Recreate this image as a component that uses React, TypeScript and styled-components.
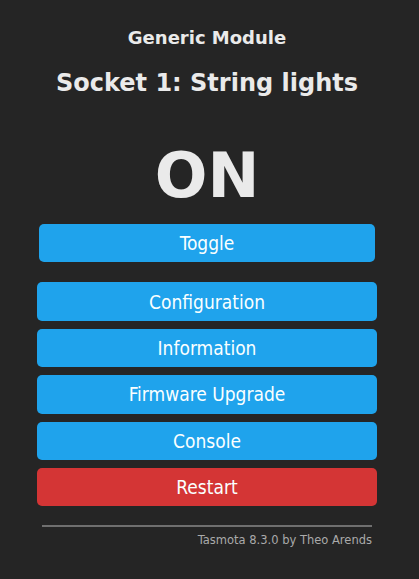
import { createGlobalStyle } from "styled-components";
import styled from "styled-components";

const GlobalStyle = createGlobalStyle`
  html, body {
    margin: 0;
    padding: 0;
    background-color: #252525;
  }
  body {
    font-family: "DejaVu Sans", Verdana, sans-serif;
    color: #eaeaea;
  }
`;

const Page = styled.div`
  width: 340px;
  margin-left: 37px;
  padding-top: 27px;
`;

const Header = styled.div`
  text-align: center;
`;

const ModuleName = styled.h3`
  margin: 0;
  font-size: 18px;
  line-height: 22px;
  font-weight: bold;
`;

const DeviceName = styled.h2`
  margin: 20px 0 0 0;
  font-size: 24px;
  line-height: 28px;
  font-weight: bold;
`;

const State = styled.div`
  text-align: center;
  font-size: 62px;
  line-height: 72px;
  font-weight: bold;
  margin-top: 43px;
`;

const ToggleRow = styled.div`
  padding: 0 2px;
  margin-top: 12px;
`;

const Buttons = styled.div`
  display: flex;
  flex-direction: column;
  gap: 8px;
  margin-top: 20px;
`;

const Button = styled.button<{ $danger?: boolean }>`
  display: block;
  width: 100%;
  height: 38.4px;
  border: 0;
  border-radius: 5px;
  padding: 0;
  font-family: "DejaVu Sans Condensed", "DejaVu Sans", sans-serif;
  font-size: 19px;
  color: #faffff;
  background-color: ${(p) => (p.$danger ? "#d43535" : "#1fa3ec")};
  cursor: pointer;
`;

const Rule = styled.hr`
  margin: 19px 5px 0 5px;
  border: 0;
  border-top: 2px solid #6f6f6f;
`;

const Footer = styled.div`
  text-align: right;
  font-size: 11.5px;
  line-height: 14px;
  color: #aaa;
  margin: 6px 5px 0 0;
`;

export default function App() {
  return (
    <>
      <GlobalStyle />
      <Page>
        <Header>
          <ModuleName>Generic Module</ModuleName>
          <DeviceName>Socket 1: String lights</DeviceName>
        </Header>
        <State>ON</State>
        <ToggleRow>
          <Button>Toggle</Button>
        </ToggleRow>
        <Buttons>
          <Button>Configuration</Button>
          <Button>Information</Button>
          <Button>Firmware Upgrade</Button>
          <Button>Console</Button>
          <Button $danger>Restart</Button>
        </Buttons>
        <Rule />
        <Footer>Tasmota 8.3.0 by Theo Arends</Footer>
      </Page>
    </>
  );
}
